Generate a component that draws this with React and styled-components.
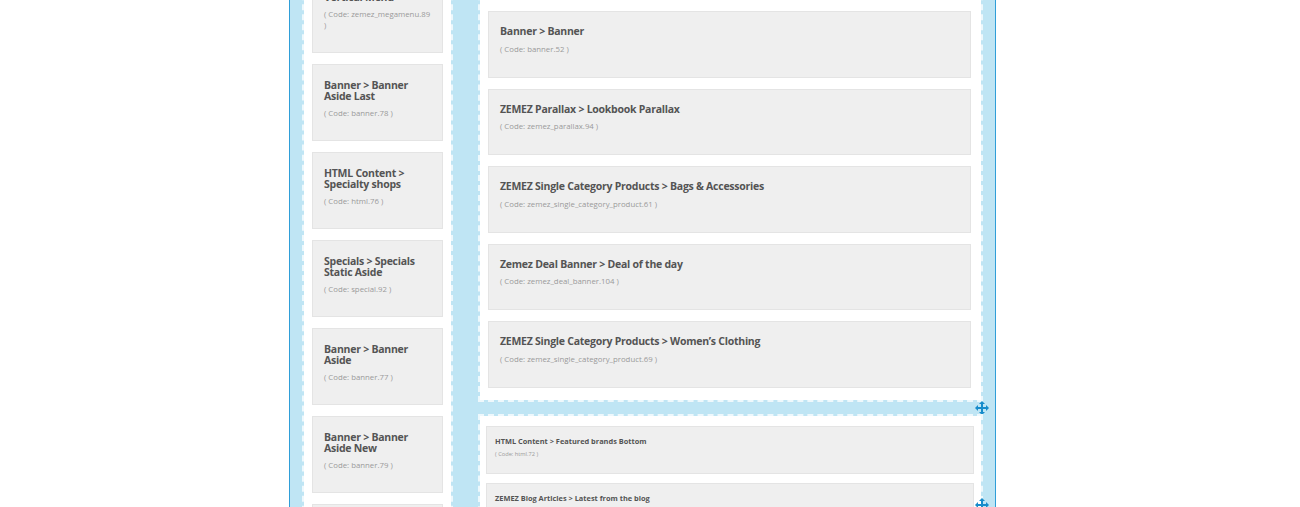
import React from "react";
import styled, { createGlobalStyle } from "styled-components";

const Global = createGlobalStyle`
  html, body {
    margin: 0;
    padding: 0;
    background: #fff;
    overflow: hidden;
    height: 507px;
  }
  body {
    font-family: "Open Sans", "Noto Sans", sans-serif;
  }
`;

// layout frame of the page builder, scrolled a little down
const Frame = styled.div`
  margin: -46px 0 0 289px;
  width: 707px;
  box-sizing: border-box;
  display: flex;
  align-items: flex-start;
  gap: 25px;
  padding: 0 12px;
  background: #bfe5f4;
  border-left: 1px solid #2f9ed8;
  border-right: 1px solid #2f9ed8;
  min-height: 700px;
`;

const Panel = styled.div`
  position: relative;
  box-sizing: border-box;
  background: #fff;
  background-clip: padding-box;
  border: 2px dashed #eef8fc;
  display: flex;
  flex-direction: column;
`;

const Aside = styled(Panel)`
  width: 151px;
  padding: 9px 8px;
  gap: 11px;
`;

const Main = styled.div`
  width: 505px;
  display: flex;
  flex-direction: column;
  gap: 12px;
`;

const Section = styled(Panel)`
  padding: ${(p) => p.$pad};
  gap: ${(p) => p.$gap};
`;

const Card = styled.div`
  background: #efefef;
  border: 1px solid #e4e4e4;
  padding: ${(p) => (p.$small ? "9px 8px 15px" : p.$wide ? "13px 11px 22px" : "15px 11px 21px")};
`;

const Title = styled.div`
  font-weight: 700;
  color: #545454;
  font-size: ${(p) => (p.$small ? "7.4px" : "10.5px")};
  letter-spacing: ${(p) => (p.$small ? "0" : "-0.25px")};
  line-height: ${(p) => (p.$small ? "10px" : p.$wide ? "12px" : "11px")};
`;

const Code = styled.div`
  color: #9a9a9a;
  font-size: ${(p) => (p.$small ? "5.7px" : "7.8px")};
  line-height: ${(p) => (p.$small ? "8px" : "11px")};
  margin-top: ${(p) => (p.$small ? "4px" : p.$wide ? "6.5px" : "6px")};
`;

const Handle = styled.div`
  position: absolute;
  right: -8px;
  width: 14px;
  height: 14px;
  top: ${(p) => p.$top};
  display: flex;
  color: #178ccb;
`;

const MoveIcon = () => (
  <svg width="14" height="14" viewBox="0 0 14 14" fill="currentColor">
    <rect x="6" y="2" width="2" height="10" />
    <rect x="2" y="6" width="10" height="2" />
    <polygon points="7,0 10,3 4,3" />
    <polygon points="7,14 10,11 4,11" />
    <polygon points="0,7 3,4 3,10" />
    <polygon points="14,7 11,4 11,10" />
  </svg>
);

const asideModules = [
  ["ZEMEZ Megamenu > Vertical Menu", "zemez_megamenu.89"],
  ["Banner > Banner Aside Last", "banner.78"],
  ["HTML Content > Specialty shops", "html.76"],
  ["Specials > Specials Static Aside", "special.92"],
  ["Banner > Banner Aside", "banner.77"],
  ["Banner > Banner Aside New", "banner.79"],
  ["Banner > Banner Aside Sale", "banner.80"],
];

const mainModules = [
  ["Banner > Banner", "banner.52"],
  ["ZEMEZ Parallax > Lookbook Parallax", "zemez_parallax.94"],
  ["ZEMEZ Single Category Products > Bags & Accessories", "zemez_single_category_product.61"],
  ["Zemez Deal Banner > Deal of the day", "zemez_deal_banner.104"],
  ["ZEMEZ Single Category Products > Women’s Clothing", "zemez_single_category_product.69"],
];

const bottomModules = [
  ["HTML Content > Featured brands Bottom", "html.72"],
  ["ZEMEZ Blog Articles > Latest from the blog", "zemez_blog.95"],
];

export default function App() {
  return (
    <>
      <Global />
      <Frame>
        <Aside>
          {asideModules.map(([name, code]) => (
            <Card key={code}>
              <Title>{name}</Title>
              <Code>( Code: {code} )</Code>
            </Card>
          ))}
        </Aside>
        <Main>
          <Section $pad="55px 10px 12px 8px" $gap="11px">
            {mainModules.map(([name, code]) => (
              <Card key={code} $wide>
                <Title $wide>{name}</Title>
                <Code $wide>( Code: {code} )</Code>
              </Card>
            ))}
            <Handle $top="calc(100% + 1px)">
              <MoveIcon />
            </Handle>
          </Section>
          <Section $pad="10px 7px 10px 6px" $gap="9px">
            {bottomModules.map(([name, code]) => (
              <Card key={code} $small>
                <Title $small>{name}</Title>
                <Code $small>( Code: {code} )</Code>
              </Card>
            ))}
            <Handle $top="82px">
              <MoveIcon />
            </Handle>
          </Section>
        </Main>
      </Frame>
    </>
  );
}
